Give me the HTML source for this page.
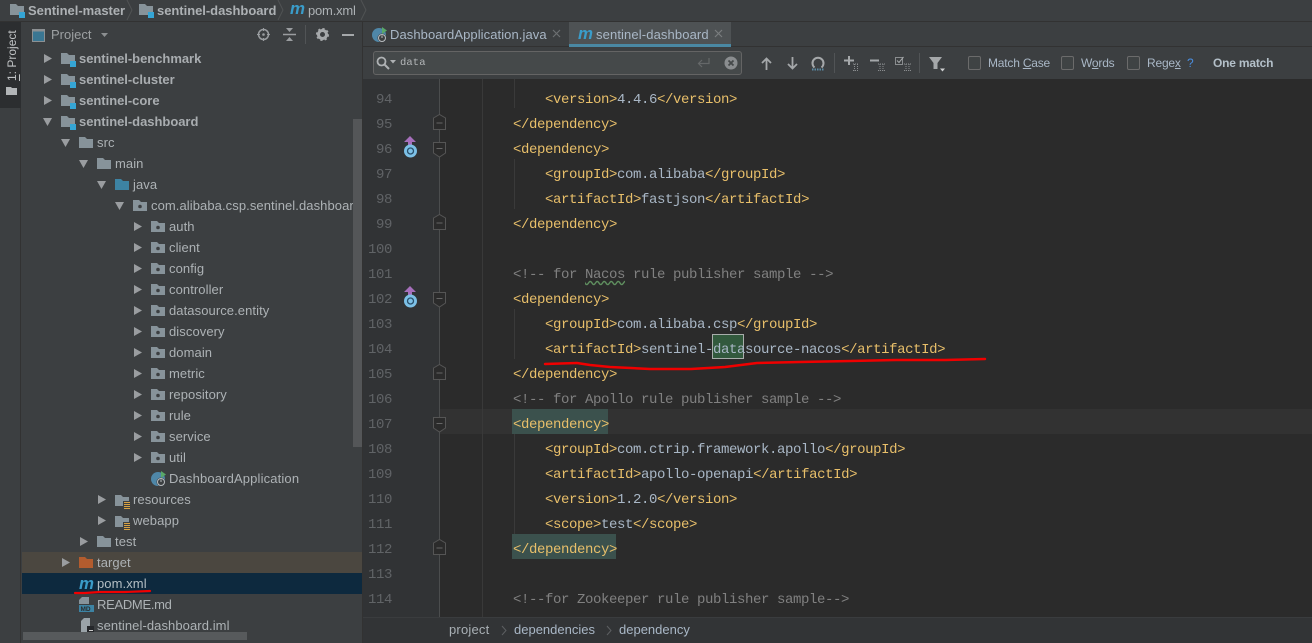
<!DOCTYPE html>
<html><head><meta charset="utf-8">
<style>
html,body{margin:0;padding:0;width:1312px;height:643px;overflow:hidden;background:#3c3f41}
*{box-sizing:border-box}
body{position:relative;font-family:"Liberation Sans",sans-serif;font-size:13px;color:#adb2b5}
.a{position:absolute}
.r{position:absolute;height:21px;line-height:21px;white-space:nowrap;letter-spacing:.08px}
.b{font-weight:bold;color:#a9adb0;letter-spacing:-.03px}
.c{position:absolute;left:0;height:25px;line-height:32px;white-space:pre;font-family:"Liberation Mono",monospace;font-size:14px;letter-spacing:-.4px;color:#a9b7c6}
.t{color:#e8bf6a}.g{color:#808080}
.n{position:absolute;left:368px;width:26px;text-align:left;height:25px;line-height:32px;font-family:"Liberation Mono",monospace;font-size:14px;letter-spacing:-.4px;color:#606366}
.o{font-size:12px;letter-spacing:-.2px;color:#a9b7c6}
svg{position:absolute;overflow:visible}
u{text-decoration:underline}
</style></head><body>
<svg width="0" height="0" style="position:absolute"><defs>
<g id="ar"><path d="M0 1L8 5.500L0 10Z" fill="#9a9da0"/></g>
<g id="ad"><path d="M1 0L10 0L5.500 8Z" fill="#9a9da0"/></g>
<g id="f"><path d="M0 0H6L8 2H14V11H0Z" fill="#87939a"/></g>
<g id="m"><path d="M0 0H6L8 2H14V11H0Z" fill="#87939a"/><rect x="9" y="8" width="6" height="6" fill="#35a5d5"/></g>
<g id="p"><path d="M0 0H6L8 2H14V11H0Z" fill="#87939a"/><circle cx="7" cy="6.500" r="1.800" fill="#3c3f41"/></g>
<g id="rs"><path d="M0 0H6L8 2H14V11H0Z" fill="#87939a"/><rect x="8" y="6" width="7" height="8" fill="#3c3f41"/><path d="M9 7.500H15M9 9.500H15M9 11.500H15M9 13.500H15" stroke="#d9a343" stroke-width="1"/></g>
<g id="mv"><text x="0" y="12" font-family="Liberation Sans" font-style="italic" font-weight="bold" font-size="17" fill="#3a9cc9" textLength="15" lengthAdjust="spacingAndGlyphs">m</text></g>
<g id="ov"><path d="M6 0L12 6H8V10H4V6H0Z" fill="#a66fbb"/><circle cx="6.500" cy="15" r="6.500" fill="#7cc0e6"/><circle cx="6.500" cy="15" r="3" fill="none" stroke="#29506b" stroke-width="1.300"/></g>
<g id="sp"><circle cx="7" cy="8" r="7" fill="#4f87a8"/><circle cx="10" cy="11" r="4.500" fill="#3c3f41"/><circle cx="10" cy="11" r="3.500" fill="none" stroke="#b8bcbf" stroke-width="1"/><path d="M10 8.500V11" stroke="#b8bcbf"/><path d="M10 0L15 3.500L10 7Z" fill="#59a869"/></g>
<g id="fold"><path d="M0.500 4L6.500 0.500L12.500 4V15.500H0.500Z" fill="#2b2b2b" stroke="#555" /><path d="M3.500 9H9.500" stroke="#666"/></g>
<g id="foldb"><path d="M0.500 0.500H12.500V11L6.500 15L0.500 11Z" fill="#2b2b2b" stroke="#555"/><path d="M3.500 6.500H9.500" stroke="#666"/></g>
</defs></svg>

<!-- top bar -->
<div class="a" style="left:0;top:0;width:1312px;height:22px;background:#3c3f41;border-bottom:1px solid #323232"></div>
<svg style="left:10px;top:4px" width="16" height="14"><use href="#m"/></svg>
<div class="r b" style="left:28px;top:0;height:20px;color:#adb1b4">Sentinel-master</div>
<svg style="left:126px;top:0" width="8" height="21"><path d="M1 0L6 10L1 20" fill="none" stroke="#505354"/></svg>
<svg style="left:139px;top:4px" width="16" height="14"><use href="#m"/></svg>
<div class="r b" style="left:157px;top:0;height:20px;color:#adb1b4">sentinel-dashboard</div>
<svg style="left:277px;top:0" width="8" height="21"><path d="M1 0L6 10L1 20" fill="none" stroke="#505354"/></svg>
<svg style="left:290px;top:2px" width="16" height="14"><use href="#mv"/></svg>
<div class="r" style="left:308px;top:0;height:20px;letter-spacing:-.2px">pom.xml</div>
<svg style="left:360px;top:0" width="8" height="21"><path d="M1 0L6 10L1 20" fill="none" stroke="#505354"/></svg>

<!-- left strip -->
<div class="a" style="left:0;top:22px;width:21px;height:621px;background:#3c3f41;border-right:1px solid #323232"></div>
<div class="a" style="left:0;top:22px;width:21px;height:86px;background:#2c2e30"></div>
<div class="a" style="left:5px;top:31px;width:14px;height:50px;writing-mode:vertical-rl;transform:rotate(180deg);line-height:14px;font-size:12px;color:#c0c3c5;white-space:nowrap"><u>1</u>: Project</div>
<svg style="left:6px;top:87px" width="11" height="9"><path d="M0 0H5L6 1H11V8H0Z" fill="#b2b5b7"/></svg>

<!-- project panel -->
<div class="a" style="left:22px;top:22px;width:341px;height:621px;background:#3c3f41"></div>
<div class="a" style="left:362px;top:22px;width:1px;height:621px;background:#323232"></div>
<svg style="left:32px;top:29px" width="13" height="13"><rect x=".5" y=".5" width="12" height="12" fill="#3a7692" stroke="#8c9093"/><rect x=".5" y=".5" width="12" height="2" fill="#8c9093"/></svg>
<div class="r" style="left:51px;top:24px;letter-spacing:0;color:#9da0a2">Project</div>
<svg style="left:101px;top:33px" width="8" height="5"><path d="M0 0H7L3.500 4Z" fill="#8c8f91"/></svg>
<svg style="left:257px;top:28px" width="13" height="13"><circle cx="6.500" cy="6.500" r="5" fill="none" stroke="#9a9da0" stroke-width="1.500"/><circle cx="6.500" cy="6.500" r="1.300" fill="#9a9da0"/><path d="M6.500 0V3M6.500 10V13M0 6.500H3M10 6.500H13" stroke="#9a9da0"/></svg>
<svg style="left:283px;top:28px" width="13" height="13"><path d="M0 6.500H13" stroke="#9a9da0" stroke-width="1.500"/><path d="M3 0H10L6.500 4Z M3 13H10L6.500 9Z" fill="#9a9da0"/></svg>
<div class="a" style="left:305px;top:25px;width:1px;height:19px;background:#515456"></div>
<svg style="left:316px;top:28px" width="13" height="13"><circle cx="6.500" cy="6.500" r="4" fill="none" stroke="#a5a8aa" stroke-width="3"/><circle cx="6.500" cy="6.500" r="5.800" fill="none" stroke="#a5a8aa" stroke-width="1.500" stroke-dasharray="2.300 2.200"/></svg>
<div class="a" style="left:342px;top:34px;width:12px;height:2px;background:#a5a8aa"></div>

<!-- row highlights -->
<div class="a" style="left:22px;top:552px;width:340px;height:21px;background:#4b4740"></div>
<div class="a" style="left:22px;top:573px;width:340px;height:21px;background:#0d293e"></div>

<!-- tree -->
<svg style="left:44px;top:53px" width="9" height="11"><use href="#ar"/></svg><svg style="left:61px;top:53px" width="15" height="13"><use href="#m"/></svg><div class="r b" style="left:79px;top:48px">sentinel-benchmark</div>
<svg style="left:44px;top:74px" width="9" height="11"><use href="#ar"/></svg><svg style="left:61px;top:74px" width="15" height="13"><use href="#m"/></svg><div class="r b" style="left:79px;top:69px">sentinel-cluster</div>
<svg style="left:44px;top:95px" width="9" height="11"><use href="#ar"/></svg><svg style="left:61px;top:95px" width="15" height="13"><use href="#m"/></svg><div class="r b" style="left:79px;top:90px">sentinel-core</div>
<svg style="left:42px;top:118px" width="11" height="8"><use href="#ad"/></svg><svg style="left:61px;top:116px" width="15" height="13"><use href="#m"/></svg><div class="r b" style="left:79px;top:111px">sentinel-dashboard</div>
<svg style="left:60px;top:139px" width="11" height="8"><use href="#ad"/></svg><svg style="left:79px;top:137px" width="14" height="12"><use href="#f"/></svg><div class="r" style="left:97px;top:132px">src</div>
<svg style="left:78px;top:160px" width="11" height="8"><use href="#ad"/></svg><svg style="left:97px;top:158px" width="14" height="12"><use href="#f"/></svg><div class="r" style="left:115px;top:153px">main</div>
<svg style="left:96px;top:181px" width="11" height="8"><use href="#ad"/></svg><svg style="left:115px;top:179px" width="14" height="12"><path d="M0 0H6L8 2H14V11H0Z" fill="#3d83a3"/></svg><div class="r" style="left:133px;top:174px">java</div>
<svg style="left:114px;top:202px" width="11" height="8"><use href="#ad"/></svg><svg style="left:133px;top:200px" width="14" height="12"><use href="#p"/></svg><div class="r" style="left:151px;top:195px">com.alibaba.csp.sentinel.dashboard</div>

<svg style="left:134px;top:221px" width="9" height="11"><use href="#ar"/></svg><svg style="left:151px;top:221px" width="14" height="12"><use href="#p"/></svg><div class="r" style="left:169px;top:216px">auth</div>
<svg style="left:134px;top:242px" width="9" height="11"><use href="#ar"/></svg><svg style="left:151px;top:242px" width="14" height="12"><use href="#p"/></svg><div class="r" style="left:169px;top:237px">client</div>
<svg style="left:134px;top:263px" width="9" height="11"><use href="#ar"/></svg><svg style="left:151px;top:263px" width="14" height="12"><use href="#p"/></svg><div class="r" style="left:169px;top:258px">config</div>
<svg style="left:134px;top:284px" width="9" height="11"><use href="#ar"/></svg><svg style="left:151px;top:284px" width="14" height="12"><use href="#p"/></svg><div class="r" style="left:169px;top:279px">controller</div>
<svg style="left:134px;top:305px" width="9" height="11"><use href="#ar"/></svg><svg style="left:151px;top:305px" width="14" height="12"><use href="#p"/></svg><div class="r" style="left:169px;top:300px">datasource.entity</div>
<svg style="left:134px;top:326px" width="9" height="11"><use href="#ar"/></svg><svg style="left:151px;top:326px" width="14" height="12"><use href="#p"/></svg><div class="r" style="left:169px;top:321px">discovery</div>
<svg style="left:134px;top:347px" width="9" height="11"><use href="#ar"/></svg><svg style="left:151px;top:347px" width="14" height="12"><use href="#p"/></svg><div class="r" style="left:169px;top:342px">domain</div>
<svg style="left:134px;top:368px" width="9" height="11"><use href="#ar"/></svg><svg style="left:151px;top:368px" width="14" height="12"><use href="#p"/></svg><div class="r" style="left:169px;top:363px">metric</div>
<svg style="left:134px;top:389px" width="9" height="11"><use href="#ar"/></svg><svg style="left:151px;top:389px" width="14" height="12"><use href="#p"/></svg><div class="r" style="left:169px;top:384px">repository</div>
<svg style="left:134px;top:410px" width="9" height="11"><use href="#ar"/></svg><svg style="left:151px;top:410px" width="14" height="12"><use href="#p"/></svg><div class="r" style="left:169px;top:405px">rule</div>
<svg style="left:134px;top:431px" width="9" height="11"><use href="#ar"/></svg><svg style="left:151px;top:431px" width="14" height="12"><use href="#p"/></svg><div class="r" style="left:169px;top:426px">service</div>
<svg style="left:134px;top:452px" width="9" height="11"><use href="#ar"/></svg><svg style="left:151px;top:452px" width="14" height="12"><use href="#p"/></svg><div class="r" style="left:169px;top:447px">util</div>
<svg style="left:151px;top:471px" width="16" height="16"><use href="#sp"/></svg><div class="r" style="left:169px;top:468px;letter-spacing:.15px">DashboardApplication</div>
<svg style="left:98px;top:494px" width="9" height="11"><use href="#ar"/></svg><svg style="left:115px;top:495px" width="15" height="14"><use href="#rs"/></svg><div class="r" style="left:133px;top:489px">resources</div>
<svg style="left:98px;top:515px" width="9" height="11"><use href="#ar"/></svg><svg style="left:115px;top:516px" width="15" height="14"><use href="#rs"/></svg><div class="r" style="left:133px;top:510px">webapp</div>
<svg style="left:80px;top:536px" width="9" height="11"><use href="#ar"/></svg><svg style="left:97px;top:536px" width="14" height="12"><use href="#f"/></svg><div class="r" style="left:115px;top:531px">test</div>
<svg style="left:62px;top:557px" width="9" height="11"><use href="#ar"/></svg><svg style="left:79px;top:557px" width="14" height="12"><path d="M0 0H6L8 2H14V11H0Z" fill="#b35c2e"/></svg><div class="r" style="left:97px;top:552px">target</div>
<svg style="left:79px;top:577px" width="15" height="14"><use href="#mv"/></svg><div class="r" style="left:97px;top:573px;color:#b4bec4">pom.xml</div>
<svg style="left:79px;top:597px" width="15" height="15"><path d="M3 0H10V7H0V3Z" fill="#87939a"/><rect x="0" y="8" width="15" height="7" fill="#3d83a3"/><text x="1.500" y="14" font-size="6.500" font-weight="bold" font-family="Liberation Sans" fill="#2b2d2e">MD</text></svg><div class="r" style="left:97px;top:594px;letter-spacing:-.3px">README.md</div>
<svg style="left:81px;top:618px" width="13" height="15"><path d="M3 0H9V14H0V3Z" fill="#9aa3a8"/><rect x="6" y="8" width="7" height="7" fill="#25272a"/><rect x="8" y="12" width="4" height="1" fill="#ccc"/></svg><div class="r" style="left:97px;top:615px">sentinel-dashboard.iml</div>

<!-- scrollbars -->
<div class="a" style="left:353px;top:119px;width:9px;height:328px;background:#545658"></div>
<div class="a" style="left:23px;top:632px;width:224px;height:8px;background:#575a5c"></div>

<!-- tabs -->
<div class="a" style="left:363px;top:22px;width:949px;height:25px;background:#3c3f41;border-bottom:1px solid #323232"></div>
<div class="a" style="left:569px;top:22px;width:162px;height:25px;background:#4e5254"></div>
<div class="a" style="left:569px;top:44px;width:162px;height:3px;background:#4a88a3"></div>
<svg style="left:372px;top:27px" width="16" height="16"><use href="#sp"/></svg>
<div class="r" style="left:390px;top:24px;color:#a9b7c6">DashboardApplication.java</div>
<svg style="left:553px;top:30px" width="8" height="8"><path d="M0 0L7 7M7 0L0 7" stroke="#6c6f71" stroke-width="1.200"/></svg>
<svg style="left:578px;top:27px" width="15" height="14"><use href="#mv"/></svg>
<div class="r" style="left:596px;top:24px;color:#a9b7c6;letter-spacing:.12px">sentinel-dashboard</div>
<svg style="left:715px;top:30px" width="8" height="8"><path d="M0 0L7 7M7 0L0 7" stroke="#7a7d7f" stroke-width="1.200"/></svg>

<!-- find bar -->
<div class="a" style="left:363px;top:47px;width:949px;height:32px;background:#3c3f41"></div>
<div class="a" style="left:373px;top:51px;width:369px;height:24px;background:#45494a;border:1px solid #646464;border-radius:3px"></div>
<svg style="left:376px;top:56px" width="20" height="14"><circle cx="5.500" cy="5.500" r="4" fill="none" stroke="#aeb1b3" stroke-width="1.800"/><path d="M8.500 8.500L13 13" stroke="#aeb1b3" stroke-width="2"/><path d="M14 4H20L17 7.500Z" fill="#aeb1b3"/></svg>
<div class="a" style="left:400px;top:54px;height:18px;line-height:18px;font-family:'Liberation Mono',monospace;font-size:10.500px;color:#b4b7b9;letter-spacing:.1px">data</div>
<svg style="left:697px;top:58px" width="13" height="10"><path d="M12 0V5.500H1.500M5 2L1.500 5.500L5 9" fill="none" stroke="#656869" stroke-width="1.200"/></svg>
<svg style="left:724px;top:56px" width="14" height="14"><circle cx="7" cy="7" r="6.500" fill="#8a8d8f"/><path d="M4.500 4.500L9.500 9.500M9.500 4.500L4.500 9.500" stroke="#45494a" stroke-width="1.800"/></svg>

<svg style="left:761px;top:57px" width="11" height="13"><path d="M5.500 13V2M1 6L5.500 1.500L10 6" fill="none" stroke="#a5a8aa" stroke-width="1.800"/></svg>
<svg style="left:787px;top:57px" width="11" height="13"><path d="M5.500 0V11M1 7L5.500 11.500L10 7" fill="none" stroke="#a5a8aa" stroke-width="1.800"/></svg>
<svg style="left:811px;top:57px" width="15" height="14"><path d="M3.500 10.500A5.500 5.500 0 1 1 10.500 10.500" fill="none" stroke="#a5a8aa" stroke-width="2"/><path d="M1 12.500H13.500" stroke="#5a8ba5" stroke-width="2" stroke-dasharray="1.500 1"/></svg>
<div class="a" style="left:834px;top:53px;width:1px;height:20px;background:#515456"></div>
<svg style="left:844px;top:56px" width="16" height="15"><path d="M0 4.500H10M5 0V9" stroke="#a5a8aa" stroke-width="2"/><path d="M9 8H15M9 14.500H15M10.500 8V14.500M13.500 8V14.500" stroke="#8a8d8f" stroke-dasharray="1 1"/></svg>
<svg style="left:869px;top:56px" width="16" height="15"><path d="M1 4.500H10" stroke="#a5a8aa" stroke-width="2"/><path d="M9 8H16M9 14.500H16M11 8V14.500M14 8V14.500" stroke="#8a8d8f" stroke-dasharray="1 1"/></svg>
<svg style="left:895px;top:56px" width="17" height="15"><rect x=".5" y="1.500" width="7" height="7" fill="none" stroke="#8a8d8f"/><path d="M2 4.500L4 6.500L8.500 1" fill="none" stroke="#a5a8aa"/><path d="M9 8H16M9 14.500H16M11 8V14.500M14 8V14.500" stroke="#8a8d8f" stroke-dasharray="1 1"/></svg>
<div class="a" style="left:919px;top:53px;width:1px;height:20px;background:#515456"></div>
<svg style="left:929px;top:57px" width="16" height="15"><path d="M0 0H13L8.500 6V12H4.500V6Z" fill="#a5a8aa"/><path d="M11 11.500H16L13.500 14.500Z" fill="#d0d2d3"/></svg>

<div class="a" style="left:968px;top:56px;width:13px;height:14px;border:1px solid #6b6b6b;border-radius:2px;background:#3f4344"></div>
<div class="r o" style="left:988px;top:53px">Match <u>C</u>ase</div>
<div class="a" style="left:1061px;top:56px;width:13px;height:14px;border:1px solid #6b6b6b;border-radius:2px;background:#3f4344"></div>
<div class="r o" style="left:1081px;top:53px">W<u>o</u>rds</div>
<div class="a" style="left:1127px;top:56px;width:13px;height:14px;border:1px solid #6b6b6b;border-radius:2px;background:#3f4344"></div>
<div class="r o" style="left:1147px;top:53px">Rege<u>x</u></div>
<div class="r" style="left:1187px;top:53px;color:#4a8ee0;font-size:12px">?</div>
<div class="r" style="left:1213px;top:53px;font-weight:bold;letter-spacing:-.2px;font-size:12px;color:#b4c0c9">One match</div>

<!-- editor -->
<div class="a" style="left:363px;top:79px;width:949px;height:538px;background:#2b2b2b"></div>
<div class="a" style="left:363px;top:79px;width:77px;height:538px;background:#313335"></div>
<div class="a" style="left:440px;top:409px;width:872px;height:25px;background:#323232"></div>
<div class="a" style="left:439px;top:79px;width:1px;height:538px;background:#4b4d4e"></div>
<div class="a" style="left:482px;top:79px;width:1px;height:538px;background:#393939"></div>
<div class="a" style="left:514px;top:79px;width:1px;height:29px;background:#3a3a3a"></div>
<div class="a" style="left:514px;top:159px;width:1px;height:50px;background:#3a3a3a"></div>
<div class="a" style="left:514px;top:309px;width:1px;height:50px;background:#3a3a3a"></div>
<div class="a" style="left:514px;top:434px;width:1px;height:100px;background:#3a3a3a"></div>

<!-- highlights -->
<div class="a" style="left:512px;top:409px;width:96px;height:25px;background:#3b514d"></div>
<div class="a" style="left:512px;top:534px;width:104px;height:25px;background:#3b514d"></div>
<div class="a" style="left:712px;top:334px;width:32px;height:25px;background:#32593d;border:1px solid #a8adab"></div>

<!-- line numbers -->
<div class="n" style="top:84px">&nbsp;94</div>
<div class="n" style="top:109px">&nbsp;95</div>
<div class="n" style="top:134px">&nbsp;96</div>
<div class="n" style="top:159px">&nbsp;97</div>
<div class="n" style="top:184px">&nbsp;98</div>
<div class="n" style="top:209px">&nbsp;99</div>
<div class="n" style="top:234px">100</div>
<div class="n" style="top:259px">101</div>
<div class="n" style="top:284px">102</div>
<div class="n" style="top:309px">103</div>
<div class="n" style="top:334px">104</div>
<div class="n" style="top:359px">105</div>
<div class="n" style="top:384px">106</div>
<div class="n" style="top:409px">107</div>
<div class="n" style="top:434px">108</div>
<div class="n" style="top:459px">109</div>
<div class="n" style="top:484px">110</div>
<div class="n" style="top:509px">111</div>
<div class="n" style="top:534px">112</div>
<div class="n" style="top:559px">113</div>
<div class="n" style="top:584px">114</div>

<!-- gutter icons -->
<svg style="left:404px;top:136px" width="13" height="22"><use href="#ov"/></svg>
<svg style="left:404px;top:286px" width="13" height="22"><use href="#ov"/></svg>
<svg style="left:433px;top:114px" width="13" height="16"><use href="#fold"/></svg>
<svg style="left:433px;top:142px" width="13" height="16"><use href="#foldb"/></svg>
<svg style="left:433px;top:214px" width="13" height="16"><use href="#fold"/></svg>
<svg style="left:433px;top:292px" width="13" height="16"><use href="#foldb"/></svg>
<svg style="left:433px;top:364px" width="13" height="16"><use href="#fold"/></svg>
<svg style="left:433px;top:417px" width="13" height="16"><use href="#foldb"/></svg>
<svg style="left:433px;top:539px" width="13" height="16"><use href="#fold"/></svg>

<!-- code -->
<div class="c" style="top:84px;left:545px"><span class="t">&lt;version&gt;</span>4.4.6<span class="t">&lt;/version&gt;</span></div>
<div class="c" style="top:109px;left:513px"><span class="t">&lt;/dependency&gt;</span></div>
<div class="c" style="top:134px;left:513px"><span class="t">&lt;dependency&gt;</span></div>
<div class="c" style="top:159px;left:545px"><span class="t">&lt;groupId&gt;</span>com.alibaba<span class="t">&lt;/groupId&gt;</span></div>
<div class="c" style="top:184px;left:545px"><span class="t">&lt;artifactId&gt;</span>fastjson<span class="t">&lt;/artifactId&gt;</span></div>
<div class="c" style="top:209px;left:513px"><span class="t">&lt;/dependency&gt;</span></div>
<div class="c g" style="top:259px;left:513px;color:#808080">&lt;!-- for <span style="text-decoration:underline wavy #5f8f5f;text-underline-offset:2px">Nacos</span> rule publisher sample --&gt;</div>
<div class="c" style="top:284px;left:513px"><span class="t">&lt;dependency&gt;</span></div>
<div class="c" style="top:309px;left:545px"><span class="t">&lt;groupId&gt;</span>com.alibaba.csp<span class="t">&lt;/groupId&gt;</span></div>
<div class="c" style="top:334px;left:545px"><span class="t">&lt;artifactId&gt;</span>sentinel-datasource-nacos<span class="t">&lt;/artifactId&gt;</span></div>
<div class="c" style="top:359px;left:513px"><span class="t">&lt;/dependency&gt;</span></div>
<div class="c g" style="top:384px;left:513px;color:#808080">&lt;!-- for Apollo rule publisher sample --&gt;</div>
<div class="c" style="top:409px;left:513px"><span class="t">&lt;dependency&gt;</span></div>
<div class="c" style="top:434px;left:545px"><span class="t">&lt;groupId&gt;</span>com.ctrip.framework.apollo<span class="t">&lt;/groupId&gt;</span></div>
<div class="c" style="top:459px;left:545px"><span class="t">&lt;artifactId&gt;</span>apollo-openapi<span class="t">&lt;/artifactId&gt;</span></div>
<div class="c" style="top:484px;left:545px"><span class="t">&lt;version&gt;</span>1.2.0<span class="t">&lt;/version&gt;</span></div>
<div class="c" style="top:509px;left:545px"><span class="t">&lt;scope&gt;</span>test<span class="t">&lt;/scope&gt;</span></div>
<div class="c" style="top:534px;left:513px"><span class="t">&lt;/dependency&gt;</span></div>
<div class="c g" style="top:584px;left:513px;color:#808080">&lt;!--for Zookeeper rule publisher sample--&gt;</div>

<!-- breadcrumb -->
<div class="a" style="left:363px;top:617px;width:949px;height:26px;background:#323436;border-top:1px solid #3a3c3e"></div>
<div class="r" style="left:449px;top:619px;color:#a9b0b5;letter-spacing:.2px">project</div>
<svg style="left:502px;top:626px" width="5" height="9"><path d="M0 0L4 4.500L0 9" fill="none" stroke="#5c5f61"/></svg>
<div class="r" style="left:514px;top:619px;color:#a9b7c6;letter-spacing:0">dependencies</div>
<svg style="left:607px;top:626px" width="5" height="9"><path d="M0 0L4 4.500L0 9" fill="none" stroke="#5c5f61"/></svg>
<div class="r" style="left:619px;top:619px;color:#a9b7c6;letter-spacing:0">dependency</div>

<!-- red annotations -->
<svg class="a" style="left:0;top:0" width="1312" height="643"><path d="M545 364L577 363L590 365L610 367L650 369L691 369L725 367L757 363L800 362L850 361L896 360L945 360L985 359" fill="none" stroke="#f00000" stroke-width="2.500" stroke-linecap="round" stroke-linejoin="round"/><path d="M75 593L85 593L100 592L125 592L150 591" fill="none" stroke="#f00000" stroke-width="2.200" stroke-linecap="round"/></svg>
</body></html>
